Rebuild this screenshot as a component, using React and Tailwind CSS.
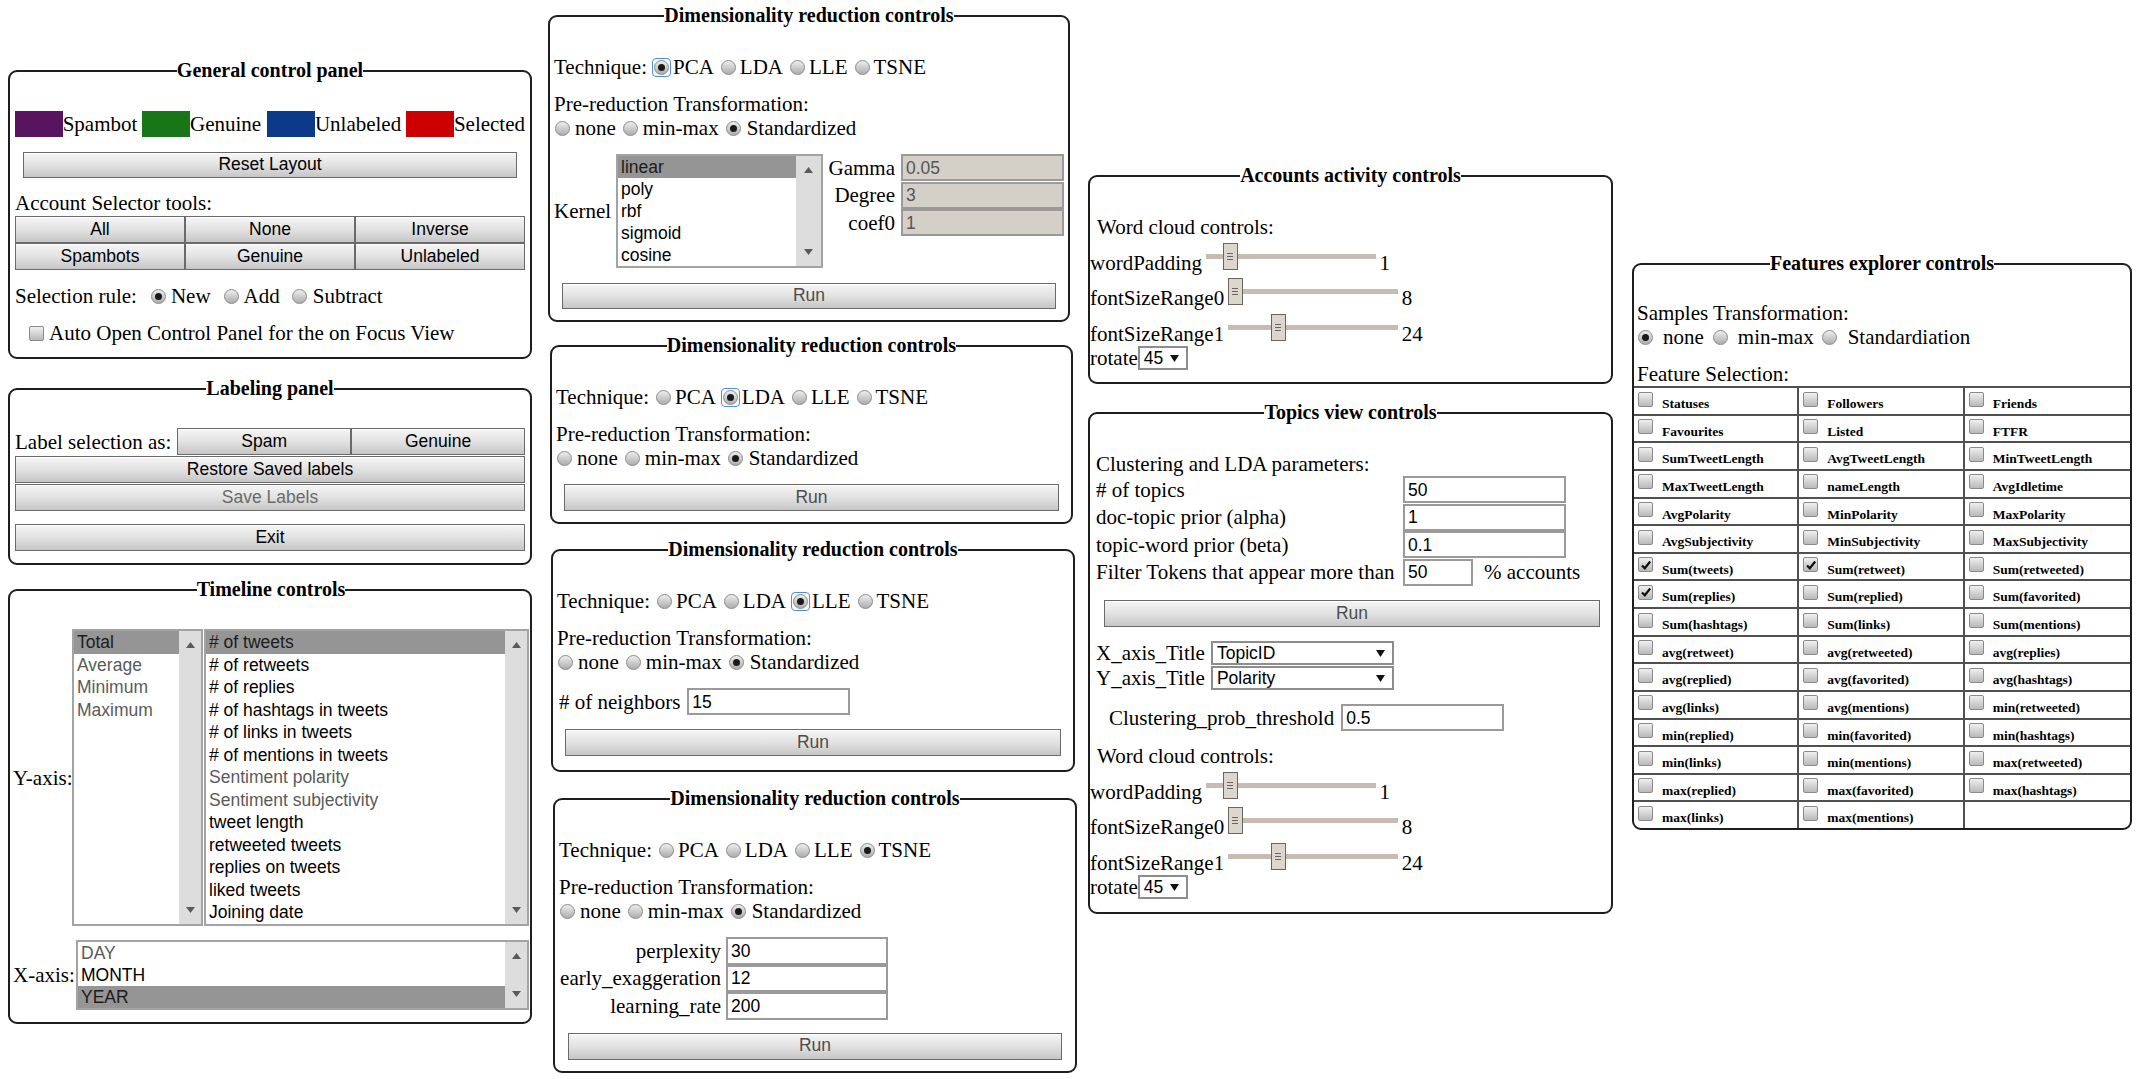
import React, { Fragment } from "react";

const SERIF = "font-['Liberation_Serif','Times_New_Roman',serif]";
const SANS = "font-['Liberation_Sans',Arial,sans-serif]";

function Panel({ title, className = "", children }) {
  return (
    <fieldset className={`min-w-0 border-2 border-[#1e1e1e] rounded-[9px] ${className}`}>
      <legend className="mx-auto px-0 text-[20px] leading-[23px] font-bold">{title}</legend>
      {children}
    </fieldset>
  );
}

function Btn({ children, className = "", text = "text-black" }) {
  return (
    <div
      className={`flex items-center justify-center border border-[#6a6a6a] bg-linear-to-b from-[#f6f6f6] via-[#e2e2e2] to-[#c6c6c6] shadow-[inset_0_1px_0_#ffffff] ${SANS} text-[17.5px] leading-none whitespace-nowrap ${text} ${className}`}
    >
      {children}
    </div>
  );
}

function Radio({ checked = false, focus = false, className = "" }) {
  return (
    <span
      className={`relative inline-flex shrink-0 items-center justify-center w-[15px] h-[15px] rounded-full border border-[#8a8a8a] bg-linear-to-b from-[#eeeeee] to-[#adadad] ${className}`}
    >
      {checked && <span className="w-[7px] h-[7px] rounded-full bg-[#1a1a1a]" />}
      {focus && <span className="absolute -inset-[3px] rounded-[4px] border-[1.5px] border-[#4b8de8]" />}
    </span>
  );
}

function Check({ checked = false, className = "" }) {
  return (
    <span
      className={`inline-flex shrink-0 items-center justify-center w-[15px] h-[15px] rounded-[2px] border border-[#8a8a8a] bg-linear-to-b from-[#f0f0f0] to-[#b9b9b9] ${className}`}
    >
      {checked && (
        <svg width="12" height="12" viewBox="0 0 12 12">
          <path d="M2 6.5 L4.8 9.3 L10.2 2.5" fill="none" stroke="#111" strokeWidth="2.2" />
        </svg>
      )}
    </span>
  );
}

function ScrollBar({ w = "w-[22px]" }) {
  return (
    <div className={`${w} shrink-0 bg-[#dddddd] flex flex-col items-center justify-between py-[11px]`}>
      <svg width="9" height="6" viewBox="0 0 9 6">
        <path d="M4.5 0 L9 6 L0 6 Z" fill="#5a5a5a" />
      </svg>
      <svg width="9" height="6" viewBox="0 0 9 6">
        <path d="M0 0 L9 0 L4.5 6 Z" fill="#5a5a5a" />
      </svg>
    </div>
  );
}

function ListBox({ items, className = "", rowH = "h-[22.5px]", sbW = "w-[22px]" }) {
  return (
    <div className={`flex border-2 border-[#a3a3a3] bg-white ${SANS} text-[17.5px] ${className}`}>
      <div className="flex-1 min-w-0 overflow-hidden">
        {items.map((it) => (
          <div
            key={it.t}
            className={`${rowH} flex items-center pl-[3px] whitespace-nowrap ${
              it.sel ? "bg-[#959595] text-[#1c1c1c]" : it.gray ? "text-[#5a5a5a]" : "text-black"
            }`}
          >
            {it.t}
          </div>
        ))}
      </div>
      <ScrollBar w={sbW} />
    </div>
  );
}

function Input({ value, className = "", beige = false }) {
  return (
    <div
      className={`flex items-center border-2 border-[#9a9a9a] pl-[3px] ${SANS} text-[17.5px] ${
        beige ? "bg-[#d4d0c8] text-[#555555]" : "bg-white text-black"
      } ${className}`}
    >
      {value}
    </div>
  );
}

function Select({ value, className = "" }) {
  return (
    <div
      className={`flex items-center justify-between border-2 border-[#8d8d8d] bg-white pl-[4px] pr-[7px] ${SANS} text-[17.5px] ${className}`}
    >
      <span>{value}</span>
      <svg width="9" height="7" viewBox="0 0 9 7">
        <path d="M0 0 H9 L4.5 7 Z" fill="#111" />
      </svg>
    </div>
  );
}

function Slider({ thumb }) {
  return (
    <div className="relative w-[170px] h-[27px] shrink-0">
      <div className="absolute left-0 right-0 top-[11px] h-[5px] bg-[#c6bcb1]" />
      <div
        className={`absolute top-0 ${thumb} w-[15px] h-[27px] border-[1.5px] border-[#6d655d] bg-[#dcd6ce] flex flex-col items-center justify-center gap-[2px]`}
      >
        <span className="w-[6px] h-[1px] bg-[#6d655d]" />
        <span className="w-[6px] h-[1px] bg-[#6d655d]" />
        <span className="w-[6px] h-[1px] bg-[#6d655d]" />
      </div>
    </div>
  );
}

function SliderRow({ label, thumb, value }) {
  return (
    <div className="flex items-end h-[35.5px]">
      <span className="leading-[24px]">{label}</span>
      <div className="ml-[3.5px] mb-[5px]">
        <Slider thumb={thumb} />
      </div>
      <span className="leading-[24px] ml-[4px]">{value}</span>
    </div>
  );
}

function WordCloud() {
  return (
    <>
      <SliderRow label="wordPadding" thumb="left-[17px]" value="1" />
      <SliderRow label="fontSizeRange0" thumb="left-0" value="8" />
      <SliderRow label="fontSizeRange1" thumb="left-[43px]" value="24" />
      <div className="flex items-center h-[25.5px]">
        <span className="leading-[24px]">rotate</span>
        <Select value="45" className="w-[50px] h-[24px]" />
      </div>
    </>
  );
}

function TechRow({ sel, focus = false, className = "" }) {
  const opts = ["PCA", "LDA", "LLE", "TSNE"];
  return (
    <div className={`flex items-center h-[24px] whitespace-nowrap ${className}`}>
      <span>Technique:</span>
      {opts.map((o, i) => (
        <Fragment key={o}>
          <Radio checked={i === sel} focus={focus && i === sel} className={i === 0 ? "ml-[7px]" : "ml-[7px]"} />
          <span className="ml-[4px]">{o}</span>
        </Fragment>
      ))}
    </div>
  );
}

function PreRows() {
  return (
    <>
      <div className="mt-[13px] h-[24px] flex items-center">Pre-reduction Transformation:</div>
      <div className="h-[24px] flex items-center whitespace-nowrap">
        <Radio className="ml-[1px]" />
        <span className="ml-[5px]">none</span>
        <Radio className="ml-[7px]" />
        <span className="ml-[5px]">min-max</span>
        <Radio checked className="ml-[7px]" />
        <span className="ml-[6px]">Standardized</span>
      </div>
    </>
  );
}

const AGG = [
  { t: "Total", sel: true },
  { t: "Average", gray: true },
  { t: "Minimum", gray: true },
  { t: "Maximum", gray: true },
];

const METRICS = [
  { t: "# of tweets", sel: true },
  { t: "# of retweets" },
  { t: "# of replies" },
  { t: "# of hashtags in tweets" },
  { t: "# of links in tweets" },
  { t: "# of mentions in tweets" },
  { t: "Sentiment polarity", gray: true },
  { t: "Sentiment subjectivity", gray: true },
  { t: "tweet length" },
  { t: "retweeted tweets" },
  { t: "replies on tweets" },
  { t: "liked tweets" },
  { t: "Joining date" },
];

const XAXIS = [{ t: "DAY", gray: true }, { t: "MONTH" }, { t: "YEAR", sel: true }];

const KERNELS = [{ t: "linear", sel: true }, { t: "poly" }, { t: "rbf" }, { t: "sigmoid" }, { t: "cosine" }];

const FEATURES = [
  "Statuses", "Followers", "Friends",
  "Favourites", "Listed", "FTFR",
  "SumTweetLength", "AvgTweetLength", "MinTweetLength",
  "MaxTweetLength", "nameLength", "AvgIdletime",
  "AvgPolarity", "MinPolarity", "MaxPolarity",
  "AvgSubjectivity", "MinSubjectivity", "MaxSubjectivity",
  "Sum(tweets)", "Sum(retweet)", "Sum(retweeted)",
  "Sum(replies)", "Sum(replied)", "Sum(favorited)",
  "Sum(hashtags)", "Sum(links)", "Sum(mentions)",
  "avg(retweet)", "avg(retweeted)", "avg(replies)",
  "avg(replied)", "avg(favorited)", "avg(hashtags)",
  "avg(links)", "avg(mentions)", "min(retweeted)",
  "min(replied)", "min(favorited)", "min(hashtags)",
  "min(links)", "min(mentions)", "max(retweeted)",
  "max(replied)", "max(favorited)", "max(hashtags)",
  "max(links)", "max(mentions)", "",
];
const CHECKED = new Set(["Sum(tweets)", "Sum(retweet)", "Sum(replies)"]);

function Column1() {
  return (
    <div className="ml-[8px] mt-[59px] w-[524px] flex flex-col shrink-0">
      <Panel title="General control panel" className="px-[5px] pb-[12px]">
        <div className="mt-[29px] flex items-center h-[26px] whitespace-nowrap">
          <span className="w-[48px] h-[26px] bg-[#58145f]" />
          <span>Spambot</span>
          <span className="ml-[5px] w-[48px] h-[26px] bg-[#187518]" />
          <span>Genuine</span>
          <span className="ml-[6px] w-[48px] h-[26px] bg-[#0c3a8a]" />
          <span>Unlabeled</span>
          <span className="ml-[5px] w-[48px] h-[26px] bg-[#cc0000]" />
          <span>Selected</span>
        </div>
        <Btn className="mt-[15px] mx-[8px] h-[26px]">Reset Layout</Btn>
        <div className="mt-[13px] h-[24px] flex items-center">Account Selector tools:</div>
        <div className="mt-[1px] grid grid-cols-3">
          <Btn className="h-[27px]">All</Btn>
          <Btn className="h-[27px]">None</Btn>
          <Btn className="h-[27px]">Inverse</Btn>
          <Btn className="h-[27px]">Spambots</Btn>
          <Btn className="h-[27px]">Genuine</Btn>
          <Btn className="h-[27px]">Unlabeled</Btn>
        </div>
        <div className="mt-[14px] h-[24px] flex items-center whitespace-nowrap">
          <span>Selection rule:</span>
          <Radio checked className="ml-[14px]" />
          <span className="ml-[5px]">New</span>
          <Radio className="ml-[13px]" />
          <span className="ml-[5px]">Add</span>
          <Radio className="ml-[12px]" />
          <span className="ml-[6px]">Subtract</span>
        </div>
        <div className="mt-[13px] h-[24px] flex items-center whitespace-nowrap">
          <Check className="ml-[14px]" />
          <span className="ml-[5px]">Auto Open Control Panel for the on Focus View</span>
        </div>
      </Panel>

      <Panel title="Labeling panel" className="mt-[18px] px-[5px] pb-[12px]">
        <div className="mt-[28px] flex items-center h-[27px]">
          <span className="whitespace-nowrap">Label selection as:</span>
          <div className="ml-[6px] flex-1 grid grid-cols-2 h-full">
            <Btn>Spam</Btn>
            <Btn>Genuine</Btn>
          </div>
        </div>
        <Btn className="mt-[1px] h-[27px]">Restore Saved labels</Btn>
        <Btn className="mt-[1px] h-[27px]" text="text-[#6b6b6b]">Save Labels</Btn>
        <Btn className="mt-[13px] h-[27px]">Exit</Btn>
      </Panel>

      <Panel title="Timeline controls" className="mt-[13px] pl-[3px] pr-[1px] pb-[12px]">
        <div className="mt-[28px] flex items-center">
          <span className="w-[59px] shrink-0 whitespace-nowrap">Y-axis:</span>
          <ListBox items={AGG} className="w-[131px] h-[297px] shrink-0" />
          <ListBox items={METRICS} className="ml-[1px] flex-1 h-[297px]" />
        </div>
        <div className="mt-[14px] flex items-center">
          <span className="w-[63px] shrink-0 whitespace-nowrap">X-axis:</span>
          <ListBox items={XAXIS} className="flex-1 h-[70px]" rowH="h-[22px]" />
        </div>
      </Panel>
    </div>
  );
}

function Column2() {
  return (
    <div className="ml-[16px] mt-[4px] w-[529px] flex flex-col shrink-0">
      <Panel title="Dimensionality reduction controls" className="w-[522px] px-[4px] pb-[11px]">
        <TechRow sel={0} focus className="mt-[28px]" />
        <PreRows />
        <div className="mt-[14px] flex items-start h-[114px]">
          <span className="self-center w-[57px]">Kernel</span>
          <ListBox items={KERNELS} className="ml-[5px] w-[207px] h-[114px] shrink-0" rowH="h-[22px]" sbW="w-[25px]" />
          <div className="flex flex-col">
            <div className="flex items-center h-[27.5px]">
              <span className="w-[72px] text-right">Gamma</span>
              <Input beige value="0.05" className="ml-[6px] w-[163px] h-[27px]" />
            </div>
            <div className="flex items-center h-[27.5px]">
              <span className="w-[72px] text-right">Degree</span>
              <Input beige value="3" className="ml-[6px] w-[163px] h-[27px]" />
            </div>
            <div className="flex items-center h-[27.5px]">
              <span className="w-[72px] text-right">coef0</span>
              <Input beige value="1" className="ml-[6px] w-[163px] h-[27px]" />
            </div>
          </div>
        </div>
        <Btn className="mt-[15px] mx-[8px] h-[26px]" text="text-[#4d4d4d]">Run</Btn>
      </Panel>

      <Panel title="Dimensionality reduction controls" className="mt-[12px] ml-[2px] w-[523px] px-[4px] pb-[11px]">
        <TechRow sel={1} focus className="mt-[28px]" />
        <PreRows />
        <Btn className="mt-[14px] mx-[8px] h-[27px]" text="text-[#4d4d4d]">Run</Btn>
      </Panel>

      <Panel title="Dimensionality reduction controls" className="mt-[14px] ml-[3px] w-[524px] px-[4px] pb-[14px]">
        <TechRow sel={2} focus className="mt-[28px]" />
        <PreRows />
        <div className="mt-[14px] flex items-center h-[27px]">
          <span className="ml-[2px] whitespace-nowrap"># of neighbors</span>
          <Input value="15" className="ml-[7px] w-[163px] h-[27px]" />
        </div>
        <Btn className="mt-[14px] mx-[8px] h-[27px]" text="text-[#4d4d4d]">Run</Btn>
      </Panel>

      <Panel title="Dimensionality reduction controls" className="mt-[15px] ml-[5px] w-[524px] px-[4px] pb-[11px]">
        <TechRow sel={3} className="mt-[28px]" />
        <PreRows />
        <div className="mt-[14px] flex flex-col">
          <div className="flex items-center h-[27.5px]">
            <span className="w-[162px] text-right">perplexity</span>
            <Input value="30" className="ml-[5px] w-[162px] h-[27.5px]" />
          </div>
          <div className="flex items-center h-[27.5px]">
            <span className="w-[162px] text-right whitespace-nowrap">early_exaggeration</span>
            <Input value="12" className="ml-[5px] w-[162px] h-[27.5px]" />
          </div>
          <div className="flex items-center h-[27.5px]">
            <span className="w-[162px] text-right">learning_rate</span>
            <Input value="200" className="ml-[5px] w-[162px] h-[27.5px]" />
          </div>
        </div>
        <Btn className="mt-[13px] mx-[9px] h-[27px]" text="text-[#4d4d4d]">Run</Btn>
      </Panel>
    </div>
  );
}

function TopicRow({ label, value, short = false, suffix }) {
  return (
    <div className="flex items-center h-[27.5px] whitespace-nowrap">
      <span className="w-[307px] shrink-0">{label}</span>
      <Input value={value} className={`${short ? "w-[70px]" : "w-[163px]"} h-[27px]`} />
      {suffix && <span className="ml-[11px]">{suffix}</span>}
    </div>
  );
}

function Column3() {
  return (
    <div className="ml-[11px] mt-[164px] w-[525px] flex flex-col shrink-0">
      <Panel title="Accounts activity controls" className="pb-[11px]">
        <div className="mt-[28px] pl-[7px] h-[24px] flex items-center">Word cloud controls:</div>
        <WordCloud />
      </Panel>

      <Panel title="Topics view controls" className="mt-[17px] pb-[12px]">
        <div className="mt-[28px] pl-[6px] h-[24px] flex items-center">Clustering and LDA parameters:</div>
        <div className="pl-[6px]">
          <TopicRow label="# of topics" value="50" />
          <TopicRow label="doc-topic prior (alpha)" value="1" />
          <TopicRow label="topic-word prior (beta)" value="0.1" />
          <TopicRow label="Filter Tokens that appear more than" value="50" short suffix="% accounts" />
        </div>
        <Btn className="mt-[14px] ml-[14px] mr-[11px] h-[27px]" text="text-[#4d4d4d]">Run</Btn>
        <div className="mt-[14px] pl-[6px] flex flex-col">
          <div className="flex items-center h-[24px]">
            <span className="whitespace-nowrap">X_axis_Title</span>
            <Select value="TopicID" className="ml-[6px] w-[183px] h-[24px]" />
          </div>
          <div className="mt-[1px] flex items-center h-[24px]">
            <span className="whitespace-nowrap">Y_axis_Title</span>
            <Select value="Polarity" className="ml-[6px] w-[183px] h-[24px]" />
          </div>
        </div>
        <div className="mt-[14px] pl-[19px] flex items-center h-[27px]">
          <span className="whitespace-nowrap">Clustering_prob_threshold</span>
          <Input value="0.5" className="ml-[7px] w-[163px] h-[27px]" />
        </div>
        <div className="mt-[13px] pl-[7px] h-[24px] flex items-center">Word cloud controls:</div>
        <WordCloud />
      </Panel>
    </div>
  );
}

function Column4() {
  return (
    <div className="ml-[19px] mt-[252px] w-[500px] shrink-0">
      <Panel title="Features explorer controls" className="pb-0 overflow-hidden">
        <div className="mt-[26px] pl-[3px] h-[24px] flex items-center">Samples Transformation:</div>
        <div className="pl-[4px] h-[24px] flex items-center whitespace-nowrap">
          <Radio checked />
          <span className="ml-[10px]">none</span>
          <Radio className="ml-[9px]" />
          <span className="ml-[10px]">min-max</span>
          <Radio className="ml-[8px]" />
          <span className="ml-[11px]">Standardiation</span>
        </div>
        <div className="mt-[13px] pl-[3px] h-[24px] flex items-center">Feature Selection:</div>
        <div className="grid grid-cols-3">
          {FEATURES.map((f, i) => (
            <div
              key={i}
              className={`h-[27.625px] border-t-2 border-[#505050] flex items-start ${i % 3 !== 2 ? "border-r-2" : ""}`}
            >
              {f && (
                <>
                  <Check checked={CHECKED.has(f)} className="mt-[3.5px] ml-[4px]" />
                  <span className="ml-[9px] mt-[8px] text-[13.5px] leading-[16px] font-bold whitespace-nowrap">{f}</span>
                </>
              )}
            </div>
          ))}
        </div>
      </Panel>
    </div>
  );
}

export default function App() {
  return (
    <div
      className={`w-[2138px] h-[1079px] bg-white text-black ${SERIF} text-[21px] leading-[24px] flex items-start overflow-hidden`}
    >
      <Column1 />
      <Column2 />
      <Column3 />
      <Column4 />
    </div>
  );
}
